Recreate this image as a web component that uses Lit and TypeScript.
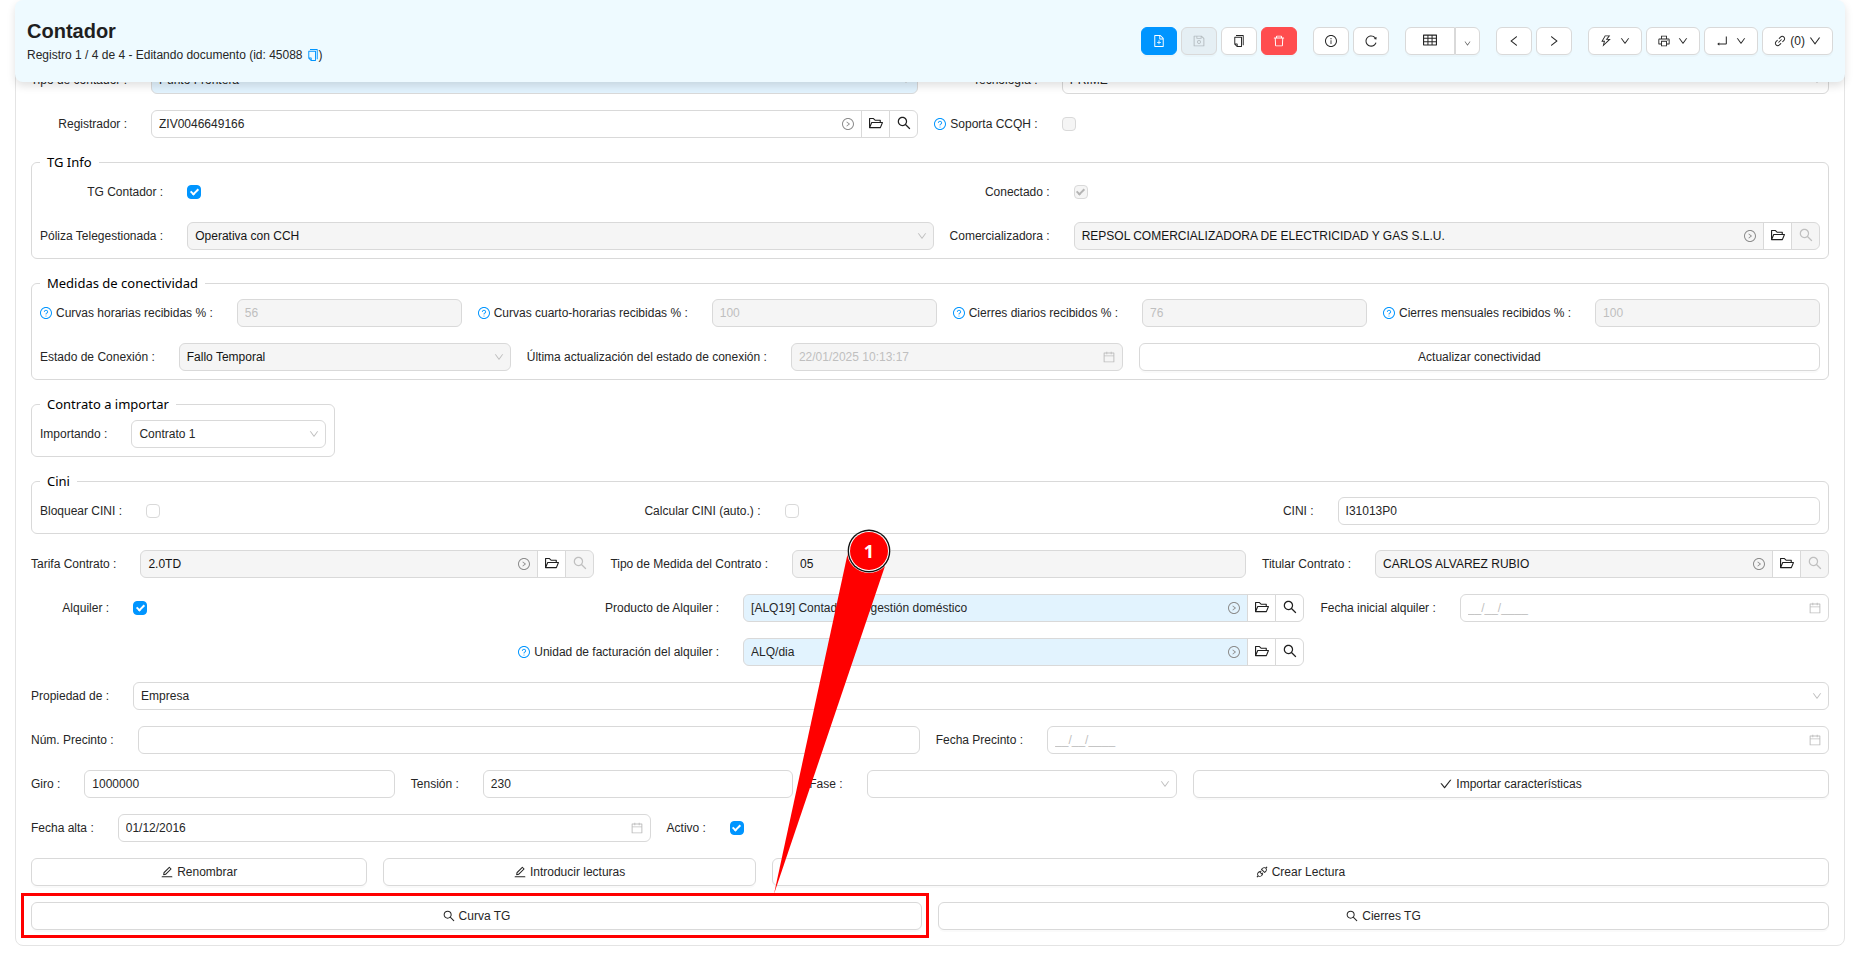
import { LitElement, html, css, svg, nothing } from "lit";
import { customElement } from "lit/decorators.js";
import { classMap } from "lit/directives/class-map.js";

const RING =
  "M512 64C264.6 64 64 264.6 64 512s200.6 448 448 448 448-200.6 448-448S759.4 64 512 64zm0 820c-205.4 0-372-166.6-372-372s166.6-372 372-372 372 166.6 372 372-166.6 372-372 372z";

const ICONS: Record<string, string> = {
  down: "M884 256h-75c-5.1 0-9.9 2.5-12.9 6.6L512 654.2 227.9 262.6c-3-4.1-7.8-6.6-12.9-6.6h-75c-6.5 0-10.3 7.4-6.5 12.7l352.6 486.1c12.8 17.6 39 17.6 51.7 0l352.6-486.1c3.9-5.3.1-12.7-6.4-12.7z",
  left: "M724 218.3V141c0-6.7-7.7-10.4-12.9-6.3L260.3 486.8a31.86 31.86 0 000 50.3l450.8 352.1c5.3 4.1 12.9.4 12.9-6.3v-77.3c0-4.9-2.3-9.6-6.1-12.6l-360-281 360-281.1c3.8-3 6.1-7.7 6.1-12.6z",
  right: "M765.7 486.8L314.9 134.7A7.97 7.97 0 00302 141v77.3c0 4.9 2.3 9.6 6.1 12.6l360 281.1-360 281.1c-3.9 3-6.1 7.7-6.1 12.6V883c0 6.7 7.7 10.4 12.9 6.3l450.8-352.1a31.96 31.96 0 000-50.4z",
  search: "M909.6 854.5L649.9 594.8C690.2 542.7 712 479 712 412c0-80.2-31.3-155.4-87.9-212.1-56.6-56.7-132-87.9-212.1-87.9s-155.5 31.3-212.1 87.9C143.2 256.5 112 331.8 112 412c0 80.1 31.3 155.5 87.9 212.1C256.5 680.8 331.8 712 412 712c67 0 130.6-21.8 182.7-62l259.7 259.6a8.2 8.2 0 0011.6 0l43.6-43.5a8.2 8.2 0 000-11.6zM570.4 570.4C528 612.7 471.8 636 412 636s-116-23.3-158.4-65.6C211.3 528 188 471.8 188 412s23.3-116.1 65.6-158.4C296 211.3 352.2 188 412 188s116.1 23.2 158.4 65.6S636 352.2 636 412s-23.3 116.1-65.6 158.4z",
  check: "M912 190h-69.9c-9.8 0-19.1 4.5-25.1 12.2L404.7 724.5 207 474a32 32 0 00-25.1-12.2H112c-6.7 0-10.4 7.7-6.3 12.9l273.9 347c12.8 16.2 37.4 16.2 50.3 0l488.4-618.9c4.1-5.1.4-12.8-6.3-12.8z",
  folder: "M928 444H820V330.4c0-17.7-14.3-32-32-32H473L355.7 186.2a8.15 8.15 0 00-5.5-2.2H96c-17.7 0-32 14.3-32 32v592c0 17.7 14.3 32 32 32h698c13 0 24.8-7.9 29.7-20l134-332c1.5-3.8 2.3-7.9 2.3-12 0-17.7-14.3-32-32-32zM136 256h188.5l119.6 114.4H748V444H238c-13 0-24.8 7.9-29.7 20L136 643.2V256zm635.3 512H159l103.3-256h612.4L771.3 768z",
  calendar: "M880 184H712v-64c0-4.4-3.6-8-8-8h-56c-4.4 0-8 3.6-8 8v64H384v-64c0-4.4-3.6-8-8-8h-56c-4.4 0-8 3.6-8 8v64H144c-17.7 0-32 14.3-32 32v664c0 17.7 14.3 32 32 32h736c17.7 0 32-14.3 32-32V216c0-17.7-14.3-32-32-32zm-40 656H184V460h656v380zM184 392V256h128v48c0 4.4 3.6 8 8 8h56c4.4 0 8-3.6 8-8v-48h256v48c0 4.4 3.6 8 8 8h56c4.4 0 8-3.6 8-8v-48h128v136H184z",
  trash: "M360 184h-8c4.4 0 8-3.6 8-8v8h304v-8c0 4.4 3.6 8 8 8h-8v72h72v-80c0-35.3-28.7-64-64-64H352c-35.3 0-64 28.7-64 64v80h72v-72zm504 72H160c-17.7 0-32 14.3-32 32v32c0 4.4 3.6 8 8 8h60.4l24.7 523c1.6 34.1 29.8 61 63.9 61h454c34.2 0 62.3-26.8 63.9-61l24.7-523H888c4.4 0 8-3.6 8-8v-32c0-17.7-14.3-32-32-32zM731.3 840H292.7l-24.2-512h487l-24.2 512z",
  save: "M893.3 293.3L730.7 130.7c-7.5-7.5-16.7-13-26.7-16V112H144c-17.7 0-32 14.3-32 32v736c0 17.7 14.3 32 32 32h736c17.7 0 32-14.3 32-32V338.5c0-17-6.7-33.2-18.7-45.2zM384 184h256v104H384V184zm456 656H184V184h136v136c0 17.7 14.3 32 32 32h320c17.7 0 32-14.3 32-32V205.8l136 136V840zM512 442c-79.5 0-144 64.5-144 144s64.5 144 144 144 144-64.5 144-144-64.5-144-144-144zm0 224c-44.2 0-80-35.8-80-80s35.8-80 80-80 80 35.8 80 80-35.8 80-80 80z",
  fileAdd: "M854.6 288.6L639.4 73.4c-6-6-14.1-9.4-22.6-9.4H192c-17.7 0-32 14.3-32 32v832c0 17.7 14.3 32 32 32h640c17.7 0 32-14.3 32-32V311.3c0-8.5-3.4-16.7-9.4-22.7zM790.2 326H602V137.8L790.2 326zm1.8 562H232V136h302v216a42 42 0 0042 42h216v494zM544 472c0-4.4-3.6-8-8-8h-48c-4.4 0-8 3.6-8 8v108H372c-4.4 0-8 3.6-8 8v48c0 4.4 3.6 8 8 8h108v108c0 4.4 3.6 8 8 8h48c4.4 0 8-3.6 8-8V644h108c4.4 0 8-3.6 8-8v-48c0-4.4-3.6-8-8-8H544V472z",
  copy: "M832 64H296c-4.4 0-8 3.6-8 8v56c0 4.4 3.6 8 8 8h496v688c0 4.4 3.6 8 8 8h56c4.4 0 8-3.6 8-8V96c0-17.7-14.3-32-32-32zM704 192H192c-17.7 0-32 14.3-32 32v530.7c0 8.5 3.4 16.6 9.4 22.6l173.3 173.3c2.2 2.2 4.7 4 7.4 5.5v1.9h4.2c3.5 1.3 7.2 2 11 2H704c17.7 0 32-14.3 32-32V224c0-17.7-14.3-32-32-32zM350 856.2L263.9 770H350v86.2zM664 888H414V746c0-22.1-17.9-40-40-40H232V264h432v624z",
  info: RING + "M464 336a48 48 0 1096 0 48 48 0 10-96 0zm72 112h-48c-4.4 0-8 3.6-8 8v272c0 4.4 3.6 8 8 8h48c4.4 0 8-3.6 8-8V456c0-4.4-3.6-8-8-8z",
  help: RING + "M623.6 316.7C593.6 290.4 554 276 512 276s-81.6 14.5-111.6 40.7C369.2 344 352 380.7 352 420v7.6c0 4.4 3.6 8 8 8h48c4.4 0 8-3.6 8-8V420c0-44.1 43.1-80 96-80s96 35.9 96 80c0 31.1-22 59.6-56.1 72.7-21.2 8.1-39.2 22.3-52.1 40.9-13.1 19-19.9 41.8-19.9 64.9V620c0 4.4 3.6 8 8 8h48c4.4 0 8-3.6 8-8v-22.7a48.3 48.3 0 0130.9-44.8c59-22.7 97.1-74.7 97.1-132.5.1-39.3-17.1-76-48.3-103.3zM472 732a40 40 0 1080 0 40 40 0 10-80 0z",
  go: RING + "M666.7 505.5l-246-178A8 8 0 00408 334v46.9c0 10.2 4.9 19.9 13.2 25.9L566.6 512 421.2 617.2c-8.3 6-13.2 15.6-13.2 25.9V690c0 6.5 7.4 10.3 12.7 6.5l246-178c4.4-3.2 4.4-9.8 0-13z",
  reload: "M909.1 209.3l-56.4 44.1C775.8 155.1 656.2 92 521.9 92 290 92 102.3 279.5 102 511.5 101.7 743.7 289.8 932 521.9 932c181.3 0 335.8-115 394.6-276.1 1.5-4.2-.7-8.9-4.9-10.3l-56.7-19.5a8 8 0 00-10.1 4.8c-1.8 5-3.8 10-5.9 14.9-17.3 41-42.1 77.8-73.7 109.4A344.77 344.77 0 01655.9 829c-42.3 17.9-87.4 27-133.8 27-46.5 0-91.5-9.1-133.8-27A341.5 341.5 0 01279 755.2a342.16 342.16 0 01-73.7-109.4c-17.9-42.4-27-87.4-27-133.9s9.1-91.5 27-133.9c17.3-41 42.1-77.8 73.7-109.4 31.6-31.6 68.4-56.4 109.3-73.8 42.3-17.9 87.4-27 133.8-27 46.5 0 91.5 9.1 133.8 27a341.5 341.5 0 01109.3 73.8c9.9 9.9 19.2 20.4 27.8 31.4l-60.2 47a8 8 0 003 14.1l175.6 43c5 1.2 9.9-2.6 9.9-7.7l.8-180.9c-.1-6.6-7.8-10.3-13-6.2z",
  table: "M928 160H96c-17.7 0-32 14.3-32 32v640c0 17.7 14.3 32 32 32h832c17.7 0 32-14.3 32-32V192c0-17.7-14.3-32-32-32zm-40 208H676V232h212v136zm0 224H676V432h212v160zM412 432h200v160H412V432zm200-64H412V232h200v136zm-476 64h212v160H136V432zm0-200h212v136H136V232zm0 424h212v136H136V656zm276 0h200v136H412V656zm476 136H676V656h212v136z",
  bolt: "M848 359.3H627.7L825.8 109c4.1-5.3.4-13-6.3-13H436c-2.8 0-5.5 1.5-6.9 4L170 547.5c-3.1 5.3.7 12 6.9 12h174.4l-89.4 357.6c-1.9 7.8 7.5 13.3 13.3 7.7L853.5 373c5.2-4.9 1.7-13.7-5.5-13.7zM378.2 732.5l60.3-241H281.1l189.6-327.4h224.6L487 427.4h211L378.2 732.5z",
  printer: "M820 436h-40c-4.4 0-8 3.6-8 8v40c0 4.4 3.6 8 8 8h40c4.4 0 8-3.6 8-8v-40c0-4.4-3.6-8-8-8zm32-104H732V120c0-4.4-3.6-8-8-8H300c-4.4 0-8 3.6-8 8v212H172c-44.2 0-80 35.8-80 80v328c0 17.7 14.3 32 32 32h168v132c0 4.4 3.6 8 8 8h424c4.4 0 8-3.6 8-8V772h168c17.7 0 32-14.3 32-32V412c0-44.2-35.8-80-80-80zM360 180h304v152H360V180zm304 664H360V568h304v276zm200-140H732V500H292v204H160V412c0-6.6 5.4-12 12-12h680c6.6 0 12 5.4 12 12v292z",
  enter: "M864 170h-60c-4.4 0-8 3.6-8 8v518H310v-73c0-6.7-7.8-10.5-13-6.3l-141.9 112a8 8 0 000 12.6l141.9 112c5.3 4.2 13 .4 13-6.3v-75h498c35.3 0 64-28.7 64-64V178c0-4.4-3.6-8-8-8z",
  link: "M574 665.4a8.03 8.03 0 00-11.3 0L446.5 781.6c-53.8 53.8-144.6 59.5-204 0-59.5-59.5-53.8-150.2 0-204l116.2-116.2c3.1-3.1 3.1-8.2 0-11.3l-39.8-39.8a8.03 8.03 0 00-11.3 0L191.4 526.5c-84.6 84.6-84.6 221.5 0 306s221.5 84.6 306 0l116.2-116.2c3.1-3.1 3.1-8.2 0-11.3L574 665.4zm258.6-474c-84.6-84.6-221.5-84.6-306 0L410.3 307.6a8.03 8.03 0 000 11.3l39.7 39.7c3.1 3.1 8.2 3.1 11.3 0l116.2-116.2c53.8-53.8 144.6-59.5 204 0 59.5 59.5 53.8 150.2 0 204L665.3 562.6a8.03 8.03 0 000 11.3l39.8 39.8c3.1 3.1 8.2 3.1 11.3 0l116.2-116.2c84.5-84.6 84.5-221.5 0-306.1zM610.1 372.3a8.03 8.03 0 00-11.3 0L372.3 598.7a8.03 8.03 0 000 11.3l39.6 39.6c3.1 3.1 8.2 3.1 11.3 0l226.4-226.4c3.1-3.1 3.1-8.2 0-11.3l-39.5-39.6z",
  edit: "M257.7 752c2 0 4-.2 6-.5L431.9 722c2-.4 3.9-1.3 5.3-2.8l423.9-423.9a9.96 9.96 0 000-14.1L694.9 114.9c-1.9-1.9-4.4-2.9-7.1-2.9s-5.2 1-7.1 2.9L256.8 538.8c-1.5 1.5-2.4 3.3-2.8 5.3l-29.5 168.2a33.5 33.5 0 009.4 29.8c6.6 6.4 14.9 9.9 23.8 9.9zm67.4-174.4L687.8 215l73.3 73.3-362.7 362.6-88.9 15.7 15.6-89zM880 836H144c-17.7 0-32 14.3-32 32v36c0 4.4 3.6 8 8 8h784c4.4 0 8-3.6 8-8v-36c0-17.7-14.3-32-32-32z",
  plug: "M917.7 148.8l-42.4-42.4c-1.6-1.6-3.6-2.3-5.7-2.3s-4.1.8-5.7 2.3l-76.1 76.1a199.27 199.27 0 00-112.1-34.3c-51.2 0-102.4 19.5-141.5 58.6L432.3 308.7a8.03 8.03 0 000 11.3L704 591.7c1.6 1.6 3.6 2.3 5.7 2.3 2 0 4.1-.8 5.7-2.3l101.9-101.9c68.9-69 77-175.7 24.3-253.5l76.1-76.1c3.1-3.2 3.1-8.3 0-11.4zM769.1 441.7l-59.4 59.4-186.8-186.8 59.4-59.4c24.9-24.9 58.1-38.7 93.4-38.7 35.3 0 68.4 13.7 93.4 38.7 24.9 24.9 38.7 58.1 38.7 93.4 0 35.3-13.8 68.4-38.7 93.4zm-190.2 105a8.03 8.03 0 00-11.3 0L501 613.3 410.7 523l66.7-66.7c3.1-3.1 3.1-8.2 0-11.3L441 408.6a8.03 8.03 0 00-11.3 0L363 475.3l-43-43a7.85 7.85 0 00-5.7-2.3c-2 0-4.1.8-5.7 2.3L206.8 534.2c-68.9 69-77 175.7-24.3 253.5l-76.1 76.1a8.03 8.03 0 000 11.3l42.4 42.4c1.6 1.6 3.6 2.3 5.7 2.3s4.1-.8 5.7-2.3l76.1-76.1c33.7 22.9 72.9 34.3 112.1 34.3 51.2 0 102.4-19.5 141.5-58.6l101.9-101.9c3.1-3.1 3.1-8.2 0-11.3l-43-43 66.7-66.7c3.1-3.1 3.1-8.2 0-11.3l-36.6-36.2zM441.7 769.1a131.32 131.32 0 01-93.4 38.7c-35.3 0-68.4-13.7-93.4-38.7a131.32 131.32 0 01-38.7-93.4c0-35.3 13.7-68.4 38.7-93.4l59.4-59.4 186.8 186.8-59.4 59.4z",
};

const icon = (name: string, size = 12) => html`<svg
  class="icon"
  width=${size}
  height=${size}
  viewBox="64 64 896 896"
  aria-hidden="true"
>${svg`<path d=${ICONS[name]}></path>`}</svg>`;

type Opts = { disabled?: boolean; required?: boolean; muted?: boolean; wide?: boolean; pick?: boolean };

const label = (id: string, text: string, help = false, cls = "") => html`
  <label class="label ${cls}" for=${id}>${help ? html`<span class="help">${icon("help")}</span>` : nothing}${text} :</label>
`;

const boxClass = (o: Opts) =>
  classMap({
    box: true,
    disabled: !!o.disabled,
    required: !!o.required,
    muted: !!o.muted,
    wide: !!o.wide,
    pick: !!o.pick,
  });

const text = (id: string, value: string, o: Opts = {}) => html`
  <span class=${boxClass(o)}><input id=${id} type="text" .value=${value} ?disabled=${!!o.disabled} /></span>
`;

const date = (id: string, value: string, o: Opts = {}) => html`
  <span class=${boxClass(o)}>
    <input id=${id} type="text" placeholder="__/__/____" .value=${value} ?disabled=${!!o.disabled} />
    <span class="faint">${icon("calendar")}</span>
  </span>
`;

const select = (id: string, value: string, o: Opts = {}) => html`
  <span class=${boxClass({ ...o, pick: true })}>
    <select id=${id} ?disabled=${!!o.disabled}><option selected>${value}</option></select>
    <span class="faint">${icon("down", 10)}</span>
  </span>
`;

const lookup = (id: string, value: string, o: Opts = {}) => html`
  <span class="lookup">
    <span class=${boxClass(o)}>
      <input id=${id} type="text" .value=${value} ?disabled=${!!o.disabled} />
      <span class="go">${icon("go")}</span>
    </span>
    <button class="addon" type="button" aria-label="Abrir">${icon("folder", 14)}</button>
    <button class="addon last" type="button" aria-label="Buscar" ?disabled=${!!o.disabled}>${icon("search", 14)}</button>
  </span>
`;

const tick = (id: string, checked: boolean, disabled = false) => html`
  <input class="tick" id=${id} type="checkbox" ?checked=${checked} ?disabled=${disabled} />
`;

const action = (caption: string, glyph = "", cls = "") => html`
  <button class="btn ${cls}" type="button">${glyph ? icon(glyph) : nothing}<span>${caption}</span></button>
`;

const tool = (glyph: string, name: string, cls = "", disabled = false) => html`
  <button class="btn tool ${cls}" type="button" aria-label=${name} ?disabled=${disabled}>${icon(glyph)}</button>
`;

const menu = (glyph: string, name: string, caption = "") => html`
  <button class="btn tool ${caption ? "tight" : ""}" type="button" aria-label=${name}>
    ${icon(glyph)}${caption ? html`<span>${caption}</span>` : nothing}${icon("down", caption ? 12 : 10)}
  </button>
`;

@customElement("app-root")
export class AppRoot extends LitElement {
  static styles = css`
    :host {
      display: block;
      font-family: "Liberation Sans", Arial, sans-serif;
      font-size: 12px;
      line-height: 16px;
      color: #262626;
      background: #fff;
    }
    *,
    *::after {
      box-sizing: border-box;
    }
    .icon {
      display: block;
      flex: none;
      fill: currentColor;
    }
    button,
    input,
    select {
      font: inherit;
      color: inherit;
      margin: 0;
    }
    .page {
      padding: 0 14px 7px 15px;
    }

    .header {
      position: sticky;
      top: 0;
      z-index: 2;
      display: flex;
      align-items: center;
      justify-content: space-between;
      min-height: 82px;
      padding: 0 12px;
      border-radius: 8px;
      background: #eefaff;
      box-shadow: 0 4px 8px rgba(0, 0, 0, 0.12);
    }
    .title {
      margin: 0;
      padding-bottom: 1px;
      font-size: 20px;
      line-height: 26px;
      font-weight: 700;
      color: #1f1f1f;
    }
    .sub {
      display: flex;
      align-items: center;
      line-height: 20px;
    }
    .copy {
      display: flex;
      padding: 0;
      margin-left: 4px;
      border: 0;
      background: none;
      color: #0095ff;
    }
    .tools {
      display: flex;
      gap: 16px;
    }
    .group {
      display: flex;
      gap: 4px;
    }
    .group.joined {
      gap: 0;
    }

    .btn {
      display: flex;
      align-items: center;
      justify-content: center;
      gap: 4px;
      height: 28px;
      padding: 0 8px;
      border: 1px solid #d9d9d9;
      border-radius: 6px;
      background: #fff;
      box-shadow: 0 2px 0 rgba(0, 0, 0, 0.02);
    }
    .btn.tool {
      gap: 8px;
      padding: 0 11px;
    }
    .btn.tight {
      gap: 4px;
    }
    .btn.primary {
      border-color: #0095ff;
      background: #0095ff;
      color: #fff;
    }
    .btn.danger {
      border-color: #ff4d4f;
      background: #ff4d4f;
      color: #fff;
    }
    .btn.off {
      background: #e5eff4;
      color: #b5bdc1;
    }
    .btn.split-main {
      width: 50px;
      padding-bottom: 2px;
      border-radius: 6px 0 0 6px;
    }
    .btn.split-more {
      width: 25px;
      padding: 4px 0 0;
      border-radius: 0 6px 6px 0;
      color: #595959;
    }

    .panel {
      display: flex;
      flex-direction: column;
      gap: 16px;
      margin-top: -32px;
      padding: 15px;
      border: 1px solid #e4e4e4;
      border-radius: 8px;
    }
    .grid {
      display: grid;
      grid-auto-rows: minmax(28px, auto);
      row-gap: 16px;
      align-items: center;
    }
    .two {
      grid-template-columns: auto 1fr auto 1fr;
    }
    .three {
      grid-template-columns: auto 1fr auto 1fr auto 1fr;
    }
    .four {
      grid-template-columns: auto 1fr auto 1fr auto 1fr auto 1fr;
    }
    .head {
      grid-template-columns: 120px 1fr auto 1fr;
    }
    .status {
      grid-template-columns: auto 10fr auto 10fr 21fr;
    }
    .rental {
      grid-template-columns: auto 369fr auto 561fr auto 369fr;
    }
    .specs {
      grid-template-columns: auto 10fr auto 10fr auto 10fr 21fr;
    }
    .dates {
      grid-template-columns: auto 16fr auto 16fr 17fr;
    }
    .single {
      grid-template-columns: auto 1fr;
    }
    .actions {
      grid-template-columns: 28fr 31fr 88fr;
      column-gap: 16px;
    }
    .halves {
      grid-template-columns: 1fr 1fr;
      column-gap: 16px;
    }
    .aside {
      margin-left: 16px;
    }

    .label {
      display: flex;
      align-items: center;
      justify-content: flex-end;
      padding: 0 24px 0 16px;
      white-space: nowrap;
    }
    .label.start {
      grid-column: 1;
      padding-left: 0;
    }
    .label.third {
      grid-column: 3;
    }
    .help {
      margin-right: 4px;
      color: #0095ff;
    }

    .box {
      display: flex;
      flex: 1;
      align-items: center;
      min-width: 0;
      height: 28px;
      padding: 0 7px;
      border: 1px solid #d9d9d9;
      border-radius: 6px;
      background: #fff;
    }
    .box.pick {
      padding-right: 6px;
    }
    .box.wide {
      grid-column: 2 / -1;
    }
    .box input,
    .box select {
      flex: 1;
      width: 0;
      min-width: 0;
      height: 26px;
      padding: 0;
      border: 0;
      outline: 0;
      background: transparent;
      opacity: 1;
      appearance: none;
    }
    .box input::placeholder {
      color: #bfbfbf;
      opacity: 1;
    }
    .box.disabled {
      background: #f5f5f5;
      color: #141414;
    }
    .box.disabled.muted {
      color: #bfbfbf;
    }
    .box.required {
      background: #e2f3fe;
    }
    .faint {
      color: #bfbfbf;
    }
    .go {
      color: #8c8c8c;
    }
    .lookup {
      display: flex;
      min-width: 0;
    }
    .lookup .box {
      border-radius: 6px 0 0 6px;
    }
    .addon {
      display: flex;
      align-items: center;
      justify-content: center;
      width: 29px;
      height: 28px;
      margin-left: -1px;
      padding: 0 0 2px;
      border: 1px solid #d9d9d9;
      background: #fff;
      color: #1f1f1f;
    }
    .addon.last {
      border-radius: 0 6px 6px 0;
    }
    .addon:disabled {
      background: #f5f5f5;
      color: #bfbfbf;
    }

    .tick {
      display: flex;
      align-items: center;
      justify-content: center;
      width: 14px;
      height: 14px;
      border: 1px solid #d9d9d9;
      border-radius: 4px;
      background: #fff;
      appearance: none;
    }
    .tick:checked {
      border-color: #0095ff;
      background: #0095ff;
      color: #fff;
    }
    .tick:disabled {
      border-color: #d9d9d9;
      background: #f5f5f5;
      color: #b4b4b4;
    }
    .tick:checked::after {
      content: "";
      width: 5px;
      height: 8px;
      margin-bottom: 2px;
      border: solid currentColor;
      border-width: 0 2px 2px 0;
      transform: rotate(45deg);
    }

    .set {
      min-width: 0;
      margin: 0;
      padding: 7px 8px 8px;
      border: 1px solid #d9d9d9;
      border-radius: 6px;
    }
    .set.small {
      width: 304px;
    }
    .legend {
      padding: 0 7px;
      font-family: "Noto Sans", "Open Sans", sans-serif;
      font-size: 13px;
      line-height: 17px;
      color: #000;
    }

    .spot {
      position: relative;
      display: grid;
    }
    .frame {
      position: absolute;
      inset: -9px -7px -8px -10px;
      border: 3px solid #f00;
      pointer-events: none;
    }
    .callout {
      position: absolute;
      left: 734px;
      bottom: 36px;
      width: 130px;
      height: 370px;
      pointer-events: none;
    }
    .callout svg {
      display: block;
    }
    .number {
      position: absolute;
      left: 82px;
      top: 5px;
      width: 44px;
      text-align: center;
      font-family: "Open Sans", "Noto Sans", sans-serif;
      font-size: 18px;
      line-height: 44px;
      font-weight: 700;
      color: #fff;
    }
  `;

  render() {
    return html`
      <div class="page">
        <header class="header">
          <div>
            <h1 class="title">Contador</h1>
            <div class="sub">
              <span>Registro 1 / 4 de 4 - Editando documento (id: 45088</span>
              <button class="copy" type="button" aria-label="Copiar id">${icon("copy")}</button>
              <span>)</span>
            </div>
          </div>
          <div class="tools">
            <div class="group">
              ${tool("fileAdd", "Nuevo", "primary")} ${tool("save", "Guardar", "off", true)}
              ${tool("copy", "Duplicar")} ${tool("trash", "Eliminar", "danger")}
            </div>
            <div class="group">${tool("info", "Información")} ${tool("reload", "Recargar")}</div>
            <div class="group joined">
              <button class="btn split-main" type="button" aria-label="Tabla">${icon("table", 14)}</button>
              <button class="btn split-more" type="button" aria-label="Cambiar vista">${icon("down", 7)}</button>
            </div>
            <div class="group">${tool("left", "Anterior")} ${tool("right", "Siguiente")}</div>
            <div class="group">
              ${menu("bolt", "Acciones")} ${menu("printer", "Imprimir")} ${menu("enter", "Relacionados")}
              ${menu("link", "Adjuntos", "(0)")}
            </div>
          </div>
        </header>

        <form class="panel">
          <div class="grid head">
            ${label("tipo", "Tipo de contador", false, "start")} ${select("tipo", "Punto Frontera", { required: true })}
            ${label("tecnologia", "Tecnología")} ${select("tecnologia", "PRIME")}
            ${label("registrador", "Registrador", false, "start")} ${lookup("registrador", "ZIV0046649166")}
            ${label("ccqh", "Soporta CCQH", true)} ${tick("ccqh", false, true)}
          </div>

          <fieldset class="set">
            <legend class="legend">TG Info</legend>
            <div class="grid two">
              ${label("tg", "TG Contador", false, "start")} ${tick("tg", true)}
              ${label("conectado", "Conectado")} ${tick("conectado", true, true)}
              ${label("poliza", "Póliza Telegestionada", false, "start")}
              ${select("poliza", "Operativa con CCH", { disabled: true })}
              ${label("comer", "Comercializadora")}
              ${lookup("comer", "REPSOL COMERCIALIZADORA DE ELECTRICIDAD Y GAS S.L.U.", { disabled: true })}
            </div>
          </fieldset>

          <fieldset class="set">
            <legend class="legend">Medidas de conectividad</legend>
            <div class="grid">
              <div class="grid four">
                ${label("ch", "Curvas horarias recibidas %", true, "start")}
                ${text("ch", "56", { disabled: true, muted: true })}
                ${label("cch", "Curvas cuarto-horarias recibidas %", true)}
                ${text("cch", "100", { disabled: true, muted: true })}
                ${label("cd", "Cierres diarios recibidos %", true)}
                ${text("cd", "76", { disabled: true, muted: true })}
                ${label("cm", "Cierres mensuales recibidos %", true)}
                ${text("cm", "100", { disabled: true, muted: true })}
              </div>
              <div class="grid status">
                ${label("estado", "Estado de Conexión", false, "start")}
                ${select("estado", "Fallo Temporal", { disabled: true })}
                ${label("ultima", "Última actualización del estado de conexión")}
                ${date("ultima", "22/01/2025 10:13:17", { disabled: true, muted: true })}
                ${action("Actualizar conectividad", "", "aside")}
              </div>
            </div>
          </fieldset>

          <fieldset class="set small">
            <legend class="legend">Contrato a importar</legend>
            <div class="grid single">
              ${label("importando", "Importando", false, "start")} ${select("importando", "Contrato 1")}
            </div>
          </fieldset>

          <fieldset class="set">
            <legend class="legend">Cini</legend>
            <div class="grid three">
              ${label("bloquear", "Bloquear CINI", false, "start")} ${tick("bloquear", false)}
              ${label("calcular", "Calcular CINI (auto.)")} ${tick("calcular", false)}
              ${label("cini", "CINI")} ${text("cini", "I31013P0")}
            </div>
          </fieldset>

          <div class="grid three">
            ${label("tarifa", "Tarifa Contrato", false, "start")} ${lookup("tarifa", "2.0TD", { disabled: true })}
            ${label("medida", "Tipo de Medida del Contrato")} ${text("medida", "05", { disabled: true })}
            ${label("titular", "Titular Contrato")} ${lookup("titular", "CARLOS ALVAREZ RUBIO", { disabled: true })}
          </div>

          <div class="grid rental">
            ${label("alquiler", "Alquiler", false, "start")} ${tick("alquiler", true)}
            ${label("producto", "Producto de Alquiler")}
            ${lookup("producto", "[ALQ19] Contador telegestión doméstico", { required: true })}
            ${label("inicial", "Fecha inicial alquiler")} ${date("inicial", "")}
            ${label("unidad", "Unidad de facturación del alquiler", true, "third")}
            ${lookup("unidad", "ALQ/dia", { required: true })}
            ${label("propiedad", "Propiedad de", false, "start")} ${select("propiedad", "Empresa", { wide: true })}
          </div>

          <div class="grid two">
            ${label("precinto", "Núm. Precinto", false, "start")} ${text("precinto", "")}
            ${label("fprecinto", "Fecha Precinto")} ${date("fprecinto", "")}
          </div>

          <div class="grid specs">
            ${label("giro", "Giro", false, "start")} ${text("giro", "1000000")}
            ${label("tension", "Tensión")} ${text("tension", "230")}
            ${label("fase", "Fase")} ${select("fase", "")}
            ${action("Importar características", "check", "aside")}
          </div>

          <div class="grid dates">
            ${label("alta", "Fecha alta", false, "start")} ${date("alta", "01/12/2016")}
            ${label("activo", "Activo")} ${tick("activo", true)}
          </div>

          <div class="grid actions">
            ${action("Renombrar", "edit")} ${action("Introducir lecturas", "edit")} ${action("Crear Lectura", "plug")}
          </div>

          <div class="grid halves">
            <div class="spot">
              ${action("Curva TG", "search")}
              <span class="frame"></span>
              <div class="callout">
                <svg width="130" height="370" viewBox="0 0 130 370" aria-hidden="true">
                  <path d="M9 370 L83 28 L120 42 Z" fill="#f00" />
                  <circle cx="104" cy="27" r="22" fill="#fff" />
                  <circle cx="104" cy="27" r="21.4" fill="#111" />
                  <circle cx="104" cy="27" r="20" fill="#fff" />
                  <circle cx="104" cy="27" r="19" fill="#f00" />
                </svg>
                <span class="number">1</span>
              </div>
            </div>
            ${action("Cierres TG", "search")}
          </div>
        </form>
      </div>
    `;
  }
}
